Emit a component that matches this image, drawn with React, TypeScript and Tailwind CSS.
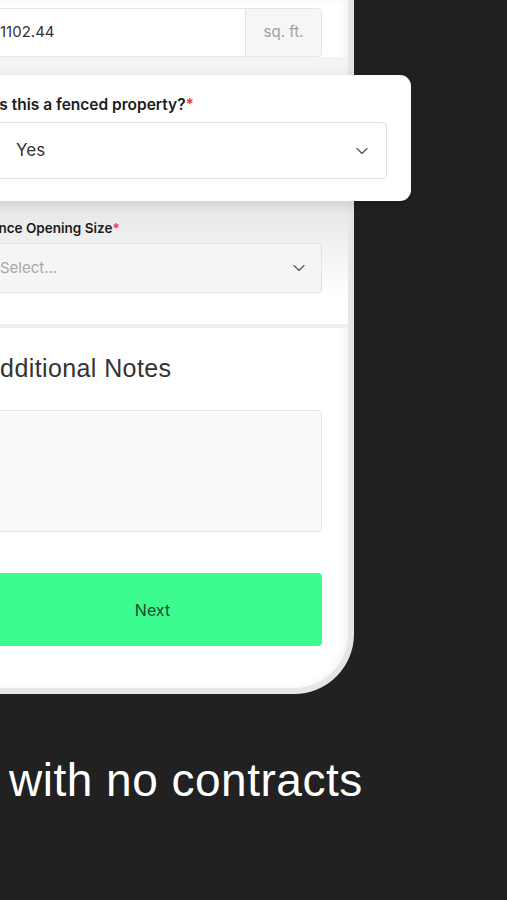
import { ChevronDown } from "lucide-react";

const ui = { fontFamily: "Inter, 'Noto Sans', sans-serif" };
const head = { fontFamily: "'Liberation Sans', Arial, sans-serif" };

function Chevron() {
  return <ChevronDown size={20} strokeWidth={1.4} className="text-[#555]" />;
}

export default function App() {
  return (
    <div className="relative flex h-[900px] w-[507px] flex-col overflow-hidden bg-[#212121]" style={ui}>
      {/* Phone */}
      <div className="ml-[-40px] h-[694px] w-[394px] shrink-0 rounded-br-[60px] bg-[#e6e6e6] pb-[6px] pr-[6px]">
        <div className="flex h-full flex-col overflow-hidden rounded-br-[54px] bg-white pl-[23px] pr-[26px] shadow-[inset_-5px_0_6px_rgba(0,0,0,0.035)]">
          {/* Square footage */}
          <div className="mt-[8px] flex h-[49px] shrink-0 overflow-hidden rounded-[4px] border border-[#e4e4e4]">
            <div className="flex flex-1 items-center px-[16px] text-[15px] text-[#333]">1102.44</div>
            <div className="flex w-[76px] items-center justify-center border-l border-[#e4e4e4] bg-[#f6f6f6] text-[15px] text-[#a0a0a0]">
              sq. ft.
            </div>
          </div>

          {/* Fenced property (under the callout) */}
          <div className="-ml-[23px] -mr-[26px] flex h-[162px] shrink-0 flex-col justify-center bg-gradient-to-b from-[#f4f4f4] to-[#eaeaea] pl-[23px] pr-[26px]">
            <div className="text-[13px] font-semibold text-[#222]">
              Is this a fenced property?<span className="text-[#e33a4b]">*</span>
            </div>
            <div className="mt-[6px] flex h-[50px] items-center justify-between rounded-[4px] border border-[#e4e4e4] px-[14px] text-[15px] text-[#333]">
              Yes
              <Chevron />
            </div>
          </div>

          {/* Fence opening */}
          <div className="-ml-[23px] -mr-[26px] flex shrink-0 flex-col bg-gradient-to-b from-[#eaeaea] via-white via-75% to-white pb-[31px] pl-[23px] pr-[26px]">
            <div className="text-[13.5px] font-semibold leading-[18px] text-[#1c1c1c]">
              Fence Opening Size<span className="text-[#e33a4b]">*</span>
            </div>
            <div className="mt-[6px] flex h-[50px] shrink-0 items-center justify-between rounded-[4px] border border-[#e2e2e2] bg-[#f5f5f5] pl-[16px] pr-[12px] text-[15px] text-[#a8a8a8]">
              Select...
              <Chevron />
            </div>
          </div>

          <div className="-ml-[23px] -mr-[26px] h-[4px] shrink-0 bg-[#efefef]" />

          {/* Notes */}
          <div className="mt-[25px] text-[25px] leading-[30px] tracking-[0.4px] text-[#333]" style={head}>
            Additional Notes
          </div>
          <div className="mt-[27px] h-[122px] shrink-0 rounded-[4px] border border-[#e6e6e6] bg-[#f9f9f9]" />

          <button className="mt-[41px] flex h-[73px] shrink-0 items-center justify-center rounded-[4px] bg-[#3cfb8f] text-[16px] text-[#1d4a30]">
            Next
          </button>
        </div>
      </div>

      {/* Callout card */}
      <div className="absolute left-[-28px] top-[75px] h-[126px] w-[439px] rounded-[11px] bg-white px-[24px] pt-[20px] shadow-[0_4px_14px_rgba(0,0,0,0.12)]">
        <div className="ml-[-1px] text-[15.5px] font-semibold leading-[20px] text-[#1c1c1c]">
          Is this a fenced property?<span className="text-[#e33a4b]">*</span>
        </div>
        <div className="mt-[7px] flex h-[57px] items-center justify-between rounded-[4px] border border-[#e2e2e2] pl-[19px] pr-[14px] text-[17px] text-[#333]">
          Yes
          <Chevron />
        </div>
      </div>

      <div className="ml-[9px] mt-[63px] whitespace-nowrap text-[46px] leading-none tracking-[0.5px] text-white" style={head}>
        with no contracts
      </div>
    </div>
  );
}
